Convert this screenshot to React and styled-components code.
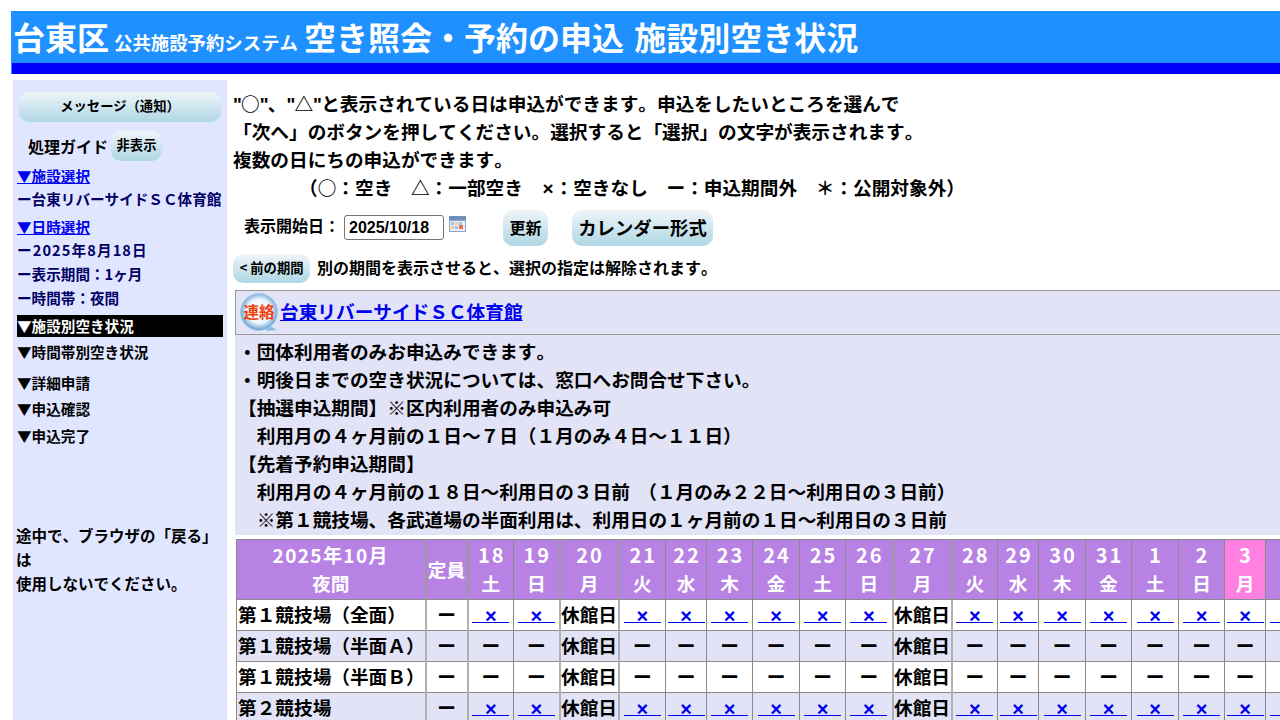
import React from 'react'
import styled, { createGlobalStyle } from 'styled-components'

const days = [
  { d: '18', w: '土', width: 46 },
  { d: '19', w: '日', width: 46 },
  { d: '20', w: '月', width: 59, closed: true },
  { d: '21', w: '火', width: 47 },
  { d: '22', w: '水', width: 41 },
  { d: '23', w: '木', width: 46 },
  { d: '24', w: '金', width: 47 },
  { d: '25', w: '土', width: 46 },
  { d: '26', w: '日', width: 47 },
  { d: '27', w: '月', width: 59, closed: true },
  { d: '28', w: '火', width: 46 },
  { d: '29', w: '水', width: 41 },
  { d: '30', w: '木', width: 47 },
  { d: '31', w: '金', width: 46 },
  { d: '1', w: '土', width: 47 },
  { d: '2', w: '日', width: 46 },
  { d: '3', w: '月', width: 41, holiday: true },
  { d: '4', w: '火', width: 46 },
]

const rooms = [
  { name: '第１競技場（全面）', open: true },
  { name: '第１競技場（半面Ａ）', open: false },
  { name: '第１競技場（半面Ｂ）', open: false },
  { name: '第２競技場', open: true },
]

const notes = [
  '・団体利用者のみお申込みできます。',
  '・明後日までの空き状況については、窓口へお問合せ下さい。',
  '【抽選申込期間】※区内利用者のみ申込み可',
  '　利用月の４ヶ月前の１日～７日（１月のみ４日～１１日）',
  '【先着予約申込期間】',
  '　利用月の４ヶ月前の１８日～利用日の３日前\u00a0\u00a0（１月のみ２２日～利用日の３日前）',
  '　※第１競技場、各武道場の半面利用は、利用日の１ヶ月前の１日～利用日の３日前',
]

const CalendarIcon = () => (
  <CalendarSvg viewBox="0 0 17 16">
    <rect x="0" y="0" width="17" height="16" fill="#8fa6c8" />
    <rect x="0" y="0" width="17" height="4" fill="#6f8fc0" />
    <rect x="1" y="5" width="15" height="10" fill="#e9eef6" />
    <rect x="2" y="6" width="3" height="3" fill="#9fc0e8" />
    <rect x="6" y="6" width="3" height="3" fill="#f0c890" />
    <rect x="10" y="6" width="3" height="3" fill="#9fc0e8" />
    <rect x="2" y="10" width="3" height="3" fill="#f0c890" />
    <rect x="6" y="10" width="3" height="3" fill="#9fc0e8" />
    <rect x="10" y="9" width="4" height="4" fill="#e8734a" />
  </CalendarSvg>
)

const BubbleIcon = () => (
  <BubbleSvg viewBox="0 0 40 40">
    <defs>
      <radialGradient id="bubble" cx="50%" cy="48%" r="52%">
        <stop offset="0%" stopColor="#ffffff" />
        <stop offset="62%" stopColor="#eef5fb" />
        <stop offset="100%" stopColor="#5f9fd4" />
      </radialGradient>
    </defs>
    <path d="M29 32 L38 37 L27 38 Z" fill="#8dbce0" />
    <circle cx="20" cy="19" r="18.5" fill="url(#bubble)" stroke="#a9cbe6" strokeWidth="1" />
    <text x="20" y="25" textAnchor="middle" fontSize="15.5" fontWeight="700" fill="#f0400f" fontFamily="'Noto Sans CJK JP', sans-serif">連絡</text>
  </BubbleSvg>
)

export default function App() {
  return (
    <Page>
      <GlobalStyle />
      <Header>
        <HeaderText>
          台東区<SubTitle>公共施設予約システム</SubTitle>空き照会・予約の申込 施設別空き状況
        </HeaderText>
        <HeaderBand />
      </Header>
      <Body>
        <Sidebar>
          <MessageButton>メッセージ（通知）</MessageButton>
          <GuideRow>
            処理ガイド
            <HideButton>非表示</HideButton>
          </GuideRow>
          <NavLink href="#">▼施設選択</NavLink>
          <NavValue>ー台東リバーサイドＳＣ体育館</NavValue>
          <NavLink href="#" $gap>▼日時選択</NavLink>
          <NavValue $spaced>ー2025年8月18日</NavValue>
          <NavValue>ー表示期間：1ヶ月</NavValue>
          <NavValue>ー時間帯：夜間</NavValue>
          <NavCurrent>▼施設別空き状況</NavCurrent>
          <NavStep $top={4}>▼時間帯別空き状況</NavStep>
          <NavStep $top={9}>▼詳細申請</NavStep>
          <NavStep $top={4}>▼申込確認</NavStep>
          <NavStep $top={5}>▼申込完了</NavStep>
          <SideWarning>
            途中で、ブラウザの「戻る」<br />は<br />使用しないでください。
          </SideWarning>
        </Sidebar>
        <Main>
          <Intro>
            <Quote>"</Quote>○<Quote>"</Quote>、<Quote>"</Quote>△<Quote>"</Quote>と表示されている日は申込ができます。申込をしたいところを選んで<br />
            「次へ」のボタンを押してください。選択すると「選択」の文字が表示されます。<br />
            複数の日にちの申込ができます。
            <Legend>
              {'（○：空き　△：一部空き　'}<LegendCross>×</LegendCross>{'：空きなし　ー：申込期間外　＊：公開対象外）'}
            </Legend>
          </Intro>
          <Toolbar>
            <StartLabel>表示開始日：</StartLabel>
            <DateInput defaultValue="2025/10/18" />
            <CalendarIcon />
            <UpdateButton>更新</UpdateButton>
            <CalendarButton>カレンダー形式</CalendarButton>
          </Toolbar>
          <PeriodRow>
            <PrevButton>&lt; 前の期間</PrevButton>
            <PeriodNote>別の期間を表示させると、選択の指定は解除されます。</PeriodNote>
          </PeriodRow>
          <FacilityBox>
            <FacilityHead>
              <BubbleIcon />
              <FacilityLink href="#">台東リバーサイドＳＣ体育館</FacilityLink>
            </FacilityHead>
            <Notes>
              {notes.map(n => <div key={n}>{n}</div>)}
            </Notes>
          </FacilityBox>
          <Table>
            <colgroup>
              <col width="189" />
              <col width="42" />
              {days.map(d => <col key={d.d} width={d.width} />)}
            </colgroup>
            <thead>
              <tr>
                <HeadCell><MonthLabel>2025年10月</MonthLabel><br />夜間</HeadCell>
                <CapacityCell $wide>定員</CapacityCell>
                {days.map(d => (
                  <HeadCell key={d.d} $holiday={d.holiday} $wide={d.closed}>
                    <DayNumber>{d.d}</DayNumber><br />{d.w}
                  </HeadCell>
                ))}
              </tr>
            </thead>
            <tbody>
              {rooms.map((r, i) => (
                <Row key={r.name} $alt={i % 2 === 1}>
                  <NameCell>{r.name}</NameCell>
                  <Cell $wide>ー</Cell>
                  {days.map(d => {
                    if (d.closed) return <Cell key={d.d} $wide>休館日</Cell>
                    return (
                      <Cell key={d.d}>
                        {r.open ? <Cross href="#">×</Cross> : 'ー'}
                      </Cell>
                    )
                  })}
                </Row>
              ))}
            </tbody>
          </Table>
        </Main>
      </Body>
    </Page>
  )
}

const GlobalStyle = createGlobalStyle`
  html, body {
    margin: 0;
    padding: 0;
    background: #fff;
  }
  body {
    font-family: "Noto Sans CJK JP", "Liberation Sans", sans-serif;
    font-weight: 700;
    color: #000;
    text-spacing-trim: space-all;
    font-kerning: none;
  }
`

const Page = styled.div`
  box-sizing: border-box;
  width: 1280px;
  height: 720px;
  padding: 11px 0 0 11px;
  overflow: hidden;
`

const Header = styled.header`
  background: #1e90ff;
  padding-left: 1px;
`

const HeaderText = styled.h1`
  margin: 0;
  height: 52px;
  padding-left: 1px;
  font-size: 32px;
  line-height: 50px;
  font-weight: 700;
  color: #fff;
  word-spacing: 3px;
  white-space: nowrap;
`

const SubTitle = styled.span`
  font-size: 18.4px;
  margin: 0 6px 0 5px;
`

const HeaderBand = styled.div`
  height: 11px;
  background: #0000ff;
`

const Body = styled.div`
  display: flex;
  gap: 6px;
  margin: 6px 0 0 2px;
`

const Sidebar = styled.nav`
  box-sizing: border-box;
  flex: none;
  width: 214px;
  height: 640px;
  padding: 12px 4px 0 4px;
  background: #e0e6ff;
  font-size: 14.6px;
  line-height: 22px;
`

const PillButton = styled.button`
  display: block;
  padding: 0 0 3px;
  border: 0;
  font-family: inherit;
  font-weight: 700;
  color: #000;
  white-space: nowrap;
  background: linear-gradient(#eff5f9, #aed7e4);
`

const MessageButton = styled(PillButton)`
  width: 202px;
  height: 30px;
  margin-left: 2px;
  border-radius: 10px;
  font-size: 13.33px;
`

const GuideRow = styled.div`
  display: flex;
  align-items: center;
  gap: 3px;
  height: 30px;
  margin: 9px 0 4px 11px;
  font-size: 16px;
`

const HideButton = styled(PillButton)`
  width: 51px;
  height: 30px;
  border-radius: 10px;
  font-size: 13.33px;
`

const NavLink = styled.a`
  display: block;
  margin-top: ${p => (p.$gap ? '5px' : '0')};
  height: 22px;
  color: #0000ee;
  text-decoration: underline;
`

const NavValue = styled.div`
  height: 24px;
  line-height: 24px;
  color: #000066;
  letter-spacing: ${p => (p.$spaced ? '1.1px' : '0')};
  white-space: nowrap;
`

const NavCurrent = styled.div`
  height: 22px;
  margin-top: 5px;
  background: #000;
  color: #fff;
`

const NavStep = styled.div`
  height: 22px;
  margin-top: ${p => p.$top}px;
`

const SideWarning = styled.p`
  margin: 76px 0 0 -1px;
  width: 212px;
  font-size: 15.5px;
  line-height: 24px;
  white-space: nowrap;
`

const Main = styled.main`
  flex: 1;
  min-width: 0;
  padding-top: 9px;
`

const Intro = styled.div`
  font-size: 18.67px;
  line-height: 28px;
  white-space: nowrap;
`

const Quote = styled.span`
  font-family: "Liberation Sans", sans-serif;
  letter-spacing: -0.8px;
  line-height: 1;
`

const Legend = styled.div`
  padding-left: 66px;
`

const LegendCross = styled.span`
  display: inline-block;
  width: 13px;
  font-family: "Liberation Sans", sans-serif;
  font-size: 19px;
  line-height: 1;
  text-align: center;
`

const Toolbar = styled.div`
  display: flex;
  align-items: flex-start;
  height: 36px;
  margin-top: 9px;
  padding-left: 11px;
`

const StartLabel = styled.span`
  width: 100px;
  font-size: 16px;
  line-height: 31px;
  white-space: nowrap;
`

const DateInput = styled.input`
  box-sizing: border-box;
  width: 100px;
  height: 25px;
  margin-top: 5px;
  padding: 0 4px;
  border: 1px solid #767676;
  border-radius: 3px;
  background: #fff;
  color: #000;
  font-family: "Liberation Sans", sans-serif;
  font-size: 16px;
  font-weight: 700;
`

const CalendarSvg = styled.svg`
  flex: none;
  width: 17px;
  height: 16px;
  margin: 6px 37px 0 5px;
`

const UpdateButton = styled(PillButton)`
  width: 45px;
  height: 36px;
  margin-right: 24px;
  border-radius: 10px;
  font-size: 16px;
`

const CalendarButton = styled(PillButton)`
  width: 141px;
  height: 36px;
  border-radius: 10px;
  font-size: 18.4px;
`

const PeriodRow = styled.div`
  display: flex;
  align-items: center;
  gap: 7px;
  height: 29px;
  margin-top: 8px;
`

const PrevButton = styled(PillButton)`
  width: 77px;
  height: 29px;
  border-radius: 10px;
  font-size: 13.33px;
`

const PeriodNote = styled.span`
  padding-bottom: 3px;
  font-size: 16px;
  white-space: nowrap;
`

const FacilityBox = styled.section`
  margin: 7px 0 0 2px;
  background: #e3e3f7;
`

const FacilityHead = styled.div`
  display: flex;
  align-items: center;
  gap: 1px;
  box-sizing: border-box;
  height: 45px;
  padding-left: 3px;
  border: 1px solid #999;
  border-right: 0;
`

const BubbleSvg = styled.svg`
  flex: none;
  width: 40px;
  height: 40px;
`

const FacilityLink = styled.a`
  padding-bottom: 5px;
  font-size: 18.67px;
  color: #0000ee;
  text-decoration: underline;
  white-space: nowrap;
`

const Notes = styled.div`
  box-sizing: border-box;
  height: 200px;
  padding: 2px 0 0 3px;
  font-size: 18.67px;
  line-height: 28px;
  white-space: nowrap;
`

const Table = styled.table`
  table-layout: fixed;
  width: 1074px;
  margin: 4px 0 0 3px;
  border-collapse: collapse;
  font-size: 18.67px;
`

const HeadCell = styled.th`
  height: 57px;
  padding: 0 0 2px;
  border: 1px solid #8a8a8a;
  border-left: ${p => (p.$wide ? '2px solid #9a9a9a' : '1px solid #8a8a8a')};
  border-right: ${p => (p.$wide ? '2px solid #9a9a9a' : '1px solid #8a8a8a')};
  background: ${p => (p.$holiday ? '#ff80e0' : '#b882e4')};
  color: #fff;
  font-weight: 700;
  line-height: 28px;
  white-space: nowrap;
`

const MonthLabel = styled.span`
  font-size: 19px;
  letter-spacing: 1.4px;
`

const DayNumber = styled.span`
  padding-left: 2px;
  font-size: 20px;
  letter-spacing: 2px;
`

const CapacityCell = styled(HeadCell)`
  font-size: 18.67px;
`

const Row = styled.tr`
  background: ${p => (p.$alt ? '#e3e3f7' : '#fff')};
`

const Cell = styled.td`
  height: 28px;
  padding: 0 0 2px;
  border: 1px solid #8a8a8a;
  border-left: ${p => (p.$wide ? '2px solid #b0b0b0' : '1px solid #8a8a8a')};
  border-right: ${p => (p.$wide ? '2px solid #b0b0b0' : '1px solid #8a8a8a')};
  text-align: center;
  line-height: 28px;
  white-space: nowrap;
`

const NameCell = styled(Cell)`
  padding-left: 1px;
  text-align: left;
`

const Cross = styled.a`
  display: inline-block;
  box-sizing: border-box;
  width: 37px;
  height: 23px;
  border-bottom: 1.5px solid #0000ee;
  color: #0000ee;
  font-family: "Liberation Sans", sans-serif;
  font-size: 20px;
  line-height: 32px;
  text-decoration: none;
  vertical-align: top;
`
